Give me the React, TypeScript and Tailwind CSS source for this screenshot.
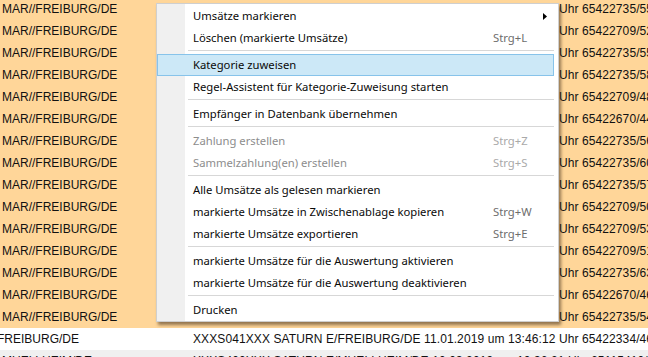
const rows = [
  { l: "MAR//FREIBURG/DE", r: "XXXS041XXX SATURN E/FREIBURG/DE 11.01.2019 um 13:41:05 Uhr 65422735/5531" },
  { l: "MAR//FREIBURG/DE", r: "XXXS041XXX SATURN E/FREIBURG/DE 11.01.2019 um 13:41:48 Uhr 65422709/5244" },
  { l: "MAR//FREIBURG/DE", r: "XXXS041XXX SATURN E/FREIBURG/DE 11.01.2019 um 13:42:10 Uhr 65422735/5572" },
  { l: "MAR//FREIBURG/DE", r: "XXXS041XXX SATURN E/FREIBURG/DE 11.01.2019 um 13:42:33 Uhr 65422735/5809" },
  { l: "MAR//FREIBURG/DE", r: "XXXS041XXX SATURN E/FREIBURG/DE 11.01.2019 um 13:42:57 Uhr 65422709/4815" },
  { l: "MAR//FREIBURG/DE", r: "XXXS041XXX SATURN E/FREIBURG/DE 11.01.2019 um 13:43:19 Uhr 65422670/4402" },
  { l: "MAR//FREIBURG/DE", r: "XXXS041XXX SATURN E/FREIBURG/DE 11.01.2019 um 13:43:40 Uhr 65422735/5637" },
  { l: "MAR//FREIBURG/DE", r: "XXXS041XXX SATURN E/FREIBURG/DE 11.01.2019 um 13:44:02 Uhr 65422735/6014" },
  { l: "MAR//FREIBURG/DE", r: "XXXS041XXX SATURN E/FREIBURG/DE 11.01.2019 um 13:44:26 Uhr 65422735/5758" },
  { l: "MAR//FREIBURG/DE", r: "XXXS041XXX SATURN E/FREIBURG/DE 11.01.2019 um 13:44:51 Uhr 65422709/5023" },
  { l: "MAR//FREIBURG/DE", r: "XXXS041XXX SATURN E/FREIBURG/DE 11.01.2019 um 13:45:13 Uhr 65422709/5361" },
  { l: "MAR//FREIBURG/DE", r: "XXXS041XXX SATURN E/FREIBURG/DE 11.01.2019 um 13:45:30 Uhr 65422709/5190" },
  { l: "MAR//FREIBURG/DE", r: "XXXS041XXX SATURN E/FREIBURG/DE 11.01.2019 um 13:45:44 Uhr 65422735/6327" },
  { l: "MAR//FREIBURG/DE", r: "XXXS041XXX SATURN E/FREIBURG/DE 11.01.2019 um 13:45:59 Uhr 65422670/4688" },
  { l: "MAR//FREIBURG/DE", r: "XXXS041XXX SATURN E/FREIBURG/DE 11.01.2019 um 13:46:03 Uhr 65422735/5449" },
];

type Item =
  | { sep: true }
  | { sep?: false; label: string; key?: string; disabled?: boolean; active?: boolean; sub?: boolean };

const items: Item[] = [
  { label: "Umsätze markieren", sub: true },
  { label: "Löschen (markierte Umsätze)", key: "Strg+L" },
  { sep: true },
  { label: "Kategorie zuweisen", active: true },
  { label: "Regel-Assistent für Kategorie-Zuweisung starten" },
  { sep: true },
  { label: "Empfänger in Datenbank übernehmen" },
  { sep: true },
  { label: "Zahlung erstellen", key: "Strg+Z", disabled: true },
  { label: "Sammelzahlung(en) erstellen", key: "Strg+S", disabled: true },
  { sep: true },
  { label: "Alle Umsätze als gelesen markieren" },
  { label: "markierte Umsätze in Zwischenablage kopieren", key: "Strg+W" },
  { label: "markierte Umsätze exportieren", key: "Strg+E" },
  { sep: true },
  { label: "markierte Umsätze für die Auswertung aktivieren" },
  { label: "markierte Umsätze für die Auswertung deaktivieren" },
  { sep: true },
  { label: "Drucken" },
];

function Row({ l, r, bg, shift }: { l: string; r: string; bg: string; shift?: boolean }) {
  return (
    <div className={`grid h-[22px] grid-cols-[193px_1fr] overflow-hidden whitespace-nowrap pt-[1px] leading-[21px] ${bg}`}>
      <div className="overflow-hidden pl-[2px]">
        <span className={shift ? "-ml-[5px] inline-block" : ""}>{l}</span>
      </div>
      <div className="overflow-hidden tracking-[0.1px]">{r}</div>
    </div>
  );
}

function ContextMenu() {
  return (
    <div
      className="absolute left-[156px] top-[3px] w-[403px] border border-[#cfcfcf] bg-white pt-[1px] text-[11.25px] text-[#0a0a0a] shadow-[2px_3px_3px_rgba(60,40,20,0.55)]"
      style={{ fontFamily: '"Noto Sans", sans-serif' }}
    >
      <div className="absolute bottom-0 left-0 top-0 w-[28px] bg-[#f0f0f0]" />
      <div className="relative">
        {items.map((it, i) =>
          it.sep ? (
            <div key={i} className="ml-[31px] mr-[4px] pb-[3px] pt-[1px]">
              <div className="h-px bg-[#d7d7d7]" />
            </div>
          ) : (
            <div
              key={i}
              className={`mr-[4px] flex h-[22px] items-center border pl-[35px] ${
                it.active ? "border-[#87c3ea] bg-[#cce8f7]" : "border-transparent"
              } ${it.disabled ? "text-[#8d8d8d]" : ""}`}
            >
              <span className="flex-1 whitespace-nowrap">{it.label}</span>
              <span
                className={`flex w-[60px] items-center justify-end pr-[6px] ${
                  it.disabled ? "text-[#a9a9a9]" : "text-[#6d6d6d]"
                }`}
              >
                {it.key ? <span className="mr-auto">{it.key}</span> : null}
                {it.sub ? (
                  <svg width="4" height="7" viewBox="0 0 4 7">
                    <polygon points="0,0 4,3.5 0,7" fill="#000" />
                  </svg>
                ) : null}
              </span>
            </div>
          )
        )}
      </div>
    </div>
  );
}

export default function App() {
  return (
    <div
      className="relative h-[357px] w-[648px] overflow-hidden bg-white text-[12px] text-[#111]"
      style={{ fontFamily: '"Liberation Sans", Arial, sans-serif' }}
    >
      <div className="-mt-[2px]">
        {rows.map((r, i) => (
          <Row key={i} l={r.l} r={r.r} bg="bg-[#ffd699]" />
        ))}
        <Row
          l="FREIBURG/DE"
          r="XXXS041XXX SATURN E/FREIBURG/DE 11.01.2019 um 13:46:12 Uhr 65422334/4681"
          bg="bg-white"
          shift
        />
        <Row
          l="MUELLHEIM/DE"
          r="XXXS400XXX SATURN E/MUELLHEIM/DE 10.03.2019 um 10:36:21 Uhr 65115410/3302"
          bg="bg-[#f0f0f0]"
        />
      </div>
      <ContextMenu />
    </div>
  );
}
